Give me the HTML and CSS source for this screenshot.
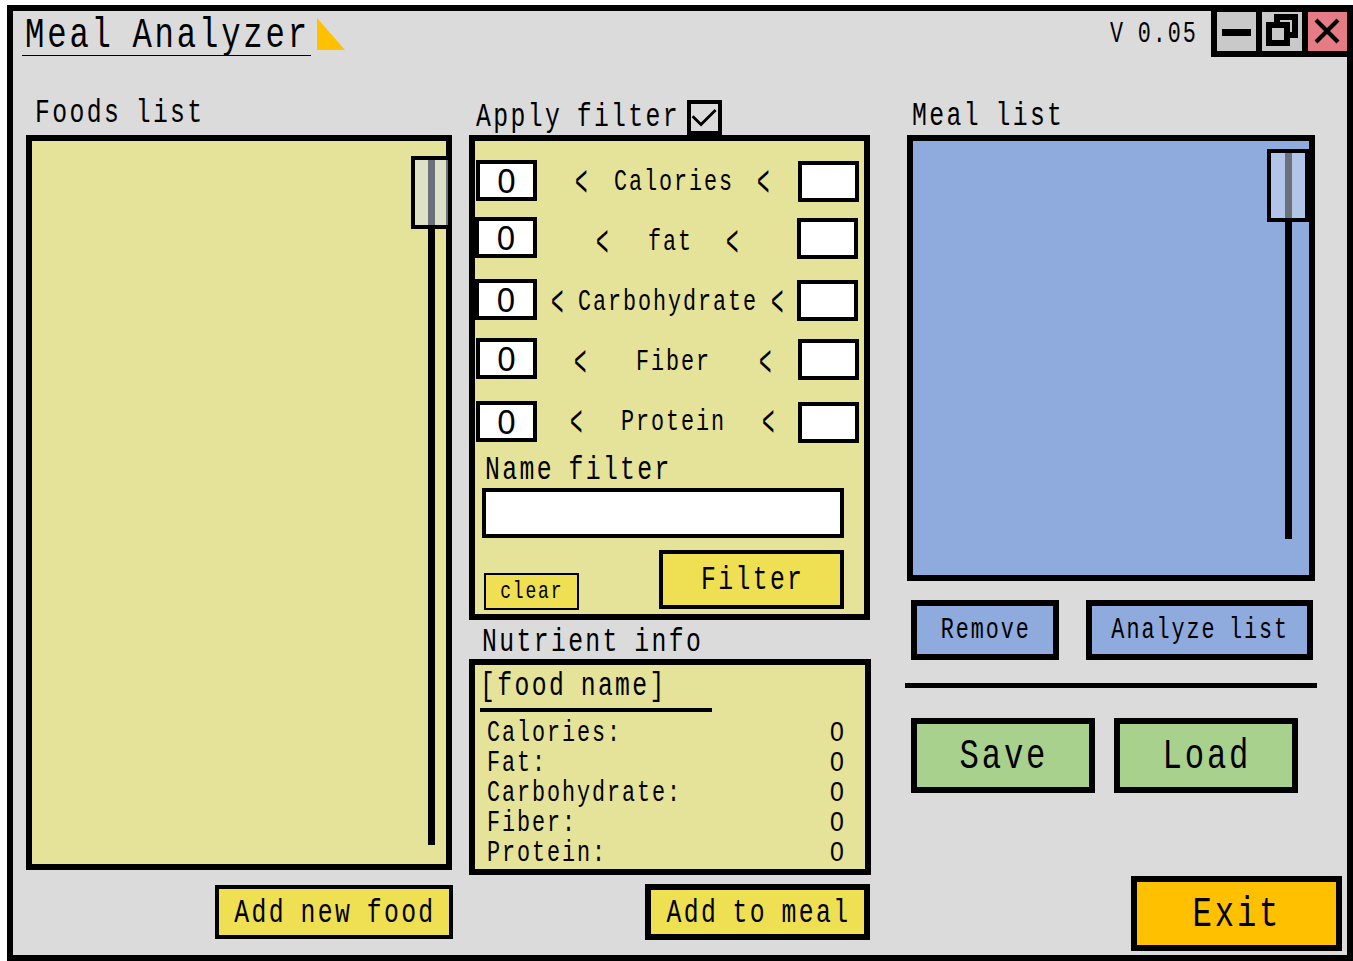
FILE: index.html
```html
<!DOCTYPE html>
<html lang="en">
<head>
<meta charset="utf-8">
<title>Meal Analyzer</title>
<link rel="stylesheet" href="styles.css">
</head>
<body>
<div class="window">
  <header class="titlebar">
    <h1 class="title"><span class="t xl">Meal Analyzer</span></h1>
    <svg class="logo" width="28" height="32" viewBox="0 0 28 32"><path d="M0 0L28 32H0Z" fill="#ffc000"/></svg>
    <span class="version"><span class="t sm">V 0.05</span></span>
    <div class="controls">
      <button class="ctl" aria-label="Minimize"><svg width="39" height="39"><path d="M5 17h29v7H5z"/></svg></button>
      <button class="ctl restore" aria-label="Restore"><svg width="40" height="39"><path fill="none" stroke="#000" stroke-width="6" d="M15 10V5h18v18h-5"/><path fill="none" stroke="#000" stroke-width="6" d="M7 13h18v18H7z"/></svg></button>
      <button class="ctl close" aria-label="Close"><svg width="39" height="39"><path stroke="#000" stroke-width="4.2" d="M8 8L30 30M30 8L8 30"/></svg></button>
    </div>
  </header>

  <main class="columns">
    <section class="foods">
      <h2 class="heading"><span class="t md">Foods list</span></h2>
      <div class="panel list">
        <div class="track"></div>
        <div class="thumb"></div>
      </div>
      <button class="btn add-food"><span class="t md">Add new food</span></button>
    </section>

    <section class="middle">
      <div class="apply">
        <span class="t md">Apply filter</span>
        <span class="check"><svg width="27" height="27"><path fill="none" stroke="#000" stroke-width="2.8" d="M1.6 12.3L10 20.5L24.6 6"/></svg></span>
      </div>
      <div class="panel filter">
        <div class="row calories"><span class="box">0</span><span class="t sm lt">&lt;</span><span class="t sm">Calories</span><span class="t sm lt">&lt;</span><span class="box max"></span></div>
        <div class="row fat"><span class="box">0</span><span class="t sm lt">&lt;</span><span class="t sm">fat</span><span class="t sm lt">&lt;</span><span class="box max"></span></div>
        <div class="row carbs"><span class="box">0</span><span class="t sm lt">&lt;</span><span class="t sm">Carbohydrate</span><span class="t sm lt">&lt;</span><span class="box max"></span></div>
        <div class="row fiber"><span class="box">0</span><span class="t sm lt">&lt;</span><span class="t sm">Fiber</span><span class="t sm lt">&lt;</span><span class="box max"></span></div>
        <div class="row protein"><span class="box">0</span><span class="t sm lt">&lt;</span><span class="t sm">Protein</span><span class="t sm lt">&lt;</span><span class="box max"></span></div>
        <label class="name-label"><span class="t md">Name filter</span></label>
        <div class="name-input"></div>
        <div class="filter-actions">
          <button class="btn clear"><span class="t xs">clear</span></button>
          <button class="btn go"><span class="t md">Filter</span></button>
        </div>
      </div>
      <h2 class="nutrient-heading"><span class="t md">Nutrient info</span></h2>
      <div class="panel info">
        <div class="food-name"><span class="t md">[food name]</span></div>
        <dl class="facts">
          <dt class="t sm">Calories:</dt><dd class="num">0</dd>
          <dt class="t sm">Fat:</dt><dd class="num">0</dd>
          <dt class="t sm">Carbohydrate:</dt><dd class="num">0</dd>
          <dt class="t sm">Fiber:</dt><dd class="num">0</dd>
          <dt class="t sm">Protein:</dt><dd class="num">0</dd>
        </dl>
      </div>
      <button class="btn add-meal"><span class="t md">Add to meal</span></button>
    </section>

    <section class="meal">
      <h2 class="heading"><span class="t md">Meal list</span></h2>
      <div class="panel list">
        <div class="track"></div>
        <div class="thumb"></div>
      </div>
      <div class="meal-actions">
        <button class="btn blue remove"><span class="t sm">Remove</span></button>
        <button class="btn blue analyze"><span class="t sm">Analyze list</span></button>
      </div>
      <div class="divider"></div>
      <div class="file-actions">
        <button class="btn green"><span class="t xl">Save</span></button>
        <button class="btn green"><span class="t xl">Load</span></button>
      </div>
      <button class="btn exit"><span class="t xl">Exit</span></button>
    </section>
  </main>
</div>
</body>
</html>
```

FILE: styles.css
```css
* { box-sizing: border-box; }
body { margin: 0; background: #fff; color: #000; overflow: hidden; }
h1, h2, dl, dd { margin: 0; font-weight: 400; }
button { margin: 0; padding: 0; color: #000; font: inherit; }

.window {
  width: 1346px; height: 956px; margin: 5px 0 0 7px;
  border: 6px solid #000; background: #dbdbdb;
}

/* condensed terminal lettering */
.t {
  display: block; flex: none;
  font-family: "Liberation Mono", monospace; font-weight: 400;
  line-height: 1; white-space: nowrap;
  letter-spacing: .096em; word-spacing: -.11em;
  transform: scaleX(.75); transform-origin: 0 50%;
}
.xl { font-size: 43px; letter-spacing: .088em; }
.md { font-size: 33px; }
.sm { font-size: 29px; letter-spacing: .09em; }
.xs { font-size: 24px; letter-spacing: .1em; }

.titlebar { display: flex; height: 46px; align-items: flex-start; }
.title { width: 289px; height: 45px; margin-left: 9px; padding: 3px 0 0 3px; border-bottom: 1px solid #000; }
.logo { margin: 7px 0 0 6px; }
.version { width: 101px; margin: 9px 0 0 auto; }
.controls { display: flex; gap: 6px; height: 46px; padding: 1px 0 6px 6px; background: #000; }
.ctl { width: 39px; height: 39px; border: 0; background: #c9c9c9; }
.ctl svg { display: block; }
.ctl.restore { width: 40px; }
.ctl.close { background: #e57b85; }

.columns { display: flex; align-items: flex-start; }
.panel { border: 6px solid #000; background: #e5e299; }
.heading { display: flex; align-items: flex-end; height: 78px; }
.btn {
  display: flex; align-items: center; justify-content: center;
  border: 4px solid #000; border-radius: 0; background: #efdf53;
}
.btn .t { transform-origin: 50% 50%; padding-left: 2px; }
.btn .md, .btn .xl { padding-top: 2px; }

.list { position: relative; }
.track { position: absolute; width: 7px; background: #000; }
.thumb { position: absolute; height: 73px; border: 4px solid #000; background: rgba(213, 224, 245, .5); }

.foods { width: 427px; margin-left: 13px; }
.foods .heading { padding: 0 0 5px 9px; }
.foods .list { width: 426px; height: 735px; }
.foods .track { left: 396px; top: 19px; height: 685px; }
.foods .thumb { left: 379px; top: 15px; width: 41px; }
.add-food { width: 238px; height: 54px; margin: 15px 0 0 auto; }

.middle { width: 402px; margin-left: 16px; }
.apply { display: flex; height: 78px; padding: 43px 0 0 7px; }
.apply .t { width: 211px; margin-top: 1px; }
.check { width: 35px; height: 35px; border: 4px solid #000; }
.check svg { display: block; }
.filter { width: 401px; height: 485px; padding-top: 10px; }
.row { display: grid; height: 60px; align-items: start; }
.row .t { margin: 17px 0 0 2px; min-width: 0; }
.row .lt { margin-left: 0; transform: scale(.72, 1.55) translateY(1px); transform-origin: 0 50%; }
.box {
  width: 61px; height: 41px; margin-left: 1px; border: 4px solid #000; background: #fff;
  font: 33px/34px "Noto Sans", sans-serif; text-align: center;
}
.calories { grid-template-columns: 100px 37px 145px 40px 62px; }
.fat { grid-template-columns: 121px 50px 80px 70px 62px; }
.carbs { grid-template-columns: 76px 25px 195px 25px 62px; }
.fiber { grid-template-columns: 99px 60px 125px 38px 62px; }
.protein { grid-template-columns: 95px 49px 143px 35px 62px; }
.calories .box { margin-top: 9px; }
.calories .max { margin-top: 10px; }
.fat .box { width: 62px; margin: 6px 0 0; }
.fat .max { width: 61px; margin: 7px 0 0 1px; }
.carbs .box { width: 62px; margin: 8px 0 0; }
.carbs .max { width: 61px; margin: 9px 0 0 1px; }
.fiber .box { margin-top: 7px; }
.fiber .max { margin-top: 8px; }
.protein .box { margin-top: 10px; }
.protein .max { margin-top: 11px; }
.name-label { display: block; height: 37px; padding: 3px 0 0 10px; }
.name-input { width: 362px; height: 50px; margin-left: 7px; border: 4px solid #000; background: #fff; }
.filter-actions { display: flex; justify-content: space-between; align-items: flex-end; width: 369px; height: 72px; padding-left: 9px; }
.clear { width: 95px; height: 37px; border-width: 2px; }
.go { width: 185px; height: 59px; margin-bottom: 1px; }
.nutrient-heading { height: 39px; padding: 6px 0 0 13px; }
.info { height: 216px; }
.food-name { width: 232px; height: 47px; margin-left: 5px; padding-top: 5px; border-bottom: 4px solid #000; }
.facts { display: grid; grid-template-columns: 343px 30px; grid-auto-rows: 30px; padding: 7px 0 0 12px; }
.num {
  font: 27px/27px "Liberation Sans", sans-serif;
  transform: scaleX(.92); transform-origin: 0 50%;
}
.add-meal { width: 225px; height: 56px; margin: 9px 0 0 176px; border-width: 6px; }

.meal { width: 436px; margin-left: 33px; }
.meal .heading { padding: 0 0 2px 8px; }
.meal .list { width: 408px; height: 446px; margin-left: 3px; background: #8faadc; }
.meal .track { left: 372px; top: 12px; height: 386px; }
.meal .thumb { left: 354px; top: 8px; width: 42px; }
.meal-actions { display: flex; gap: 27px; margin: 19px 0 0 7px; }
.meal .btn { border-width: 6px; }
.meal .blue, .blue { height: 60px; background: #8faadc; }
.remove { width: 148px; }
.analyze { width: 227px; }
.divider { width: 412px; height: 5px; margin: 23px 0 0 1px; background: #000; }
.file-actions { display: flex; gap: 19px; margin: 30px 0 0 7px; }
.green { width: 184px; height: 75px; background: #a9d18e; }
.exit { width: 211px; height: 75px; margin: 83px 0 0 227px; background: #ffc000; }
```
